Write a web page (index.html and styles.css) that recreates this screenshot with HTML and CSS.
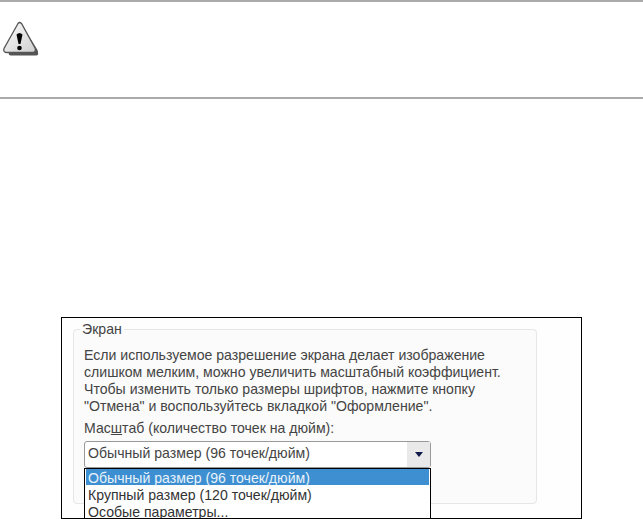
FILE: index.html
```html
<!DOCTYPE html>
<html lang="ru">
<head>
<meta charset="utf-8">
<title>Экран</title>
<link rel="stylesheet" href="styles.css">
</head>
<body>
<section class="note">
  <svg class="warn" width="36" height="36" viewBox="0 0 36 36" aria-hidden="true">
    <defs><filter id="soft" x="-20%" y="-20%" width="140%" height="140%"><feGaussianBlur stdDeviation="0.6"/></filter>
    <filter id="soft2" x="-10%" y="-10%" width="120%" height="120%"><feGaussianBlur stdDeviation="0.35"/></filter>
    <linearGradient id="fillw" x1="0" y1="0" x2="1" y2="1"><stop offset="0" stop-color="#fbfbfb"/><stop offset="1" stop-color="#d0d0d0"/></linearGradient></defs>
    <path d="M19 3 L34.500 28 Q36.500 33.500 33 33.500 L8 33.500 Q5 33.500 6 30 Z" fill="#555" filter="url(#soft)"/>
    <g filter="url(#soft2)">
      <path d="M15 1.500 Q16.500 -0.500 18.500 1.500 L32 26 Q33.500 30 30 30.500 L3 30.500 Q0 30 1 26.500 Z" fill="url(#fillw)" stroke="#555" stroke-width="1.300"/>
      <path d="M13.500 12.500 Q16.500 9.500 19.500 12.500 L17.500 22 L15.500 22 Z" fill="#050505"/>
      <circle cx="16.500" cy="26" r="2.300" fill="#050505"/>
    </g>
  </svg>
</section>
<figure class="shot">
  <fieldset class="group">
    <legend>Экран</legend>
    <p class="desc">Если используемое разрешение экрана делает изображение<br>слишком мелким, можно увеличить масштабный коэффициент.<br>Чтобы изменить только размеры шрифтов, нажмите кнопку<br>"Отмена" и воспользуйтесь вкладкой "Оформление".</p>
    <p class="label">Мас<u>ш</u>таб (количество точек на дюйм):</p>
    <div class="combo">
      <span class="value">Обычный размер (96 точек/дюйм)</span>
      <span class="arrow"><svg width="8" height="5" viewBox="0 0 8 5" aria-hidden="true"><path d="M0 0H8L4 5Z" fill="#101a4a"/></svg></span>
      <ul class="list">
        <li class="sel">Обычный размер (96 точек/дюйм)</li>
        <li>Крупный размер (120 точек/дюйм)</li>
        <li>Особые параметры...</li>
      </ul>
    </div>
  </fieldset>
</figure>
</body>
</html>
```
FILE: styles.css
```css
html, body { margin: 0; padding: 0; background: #fff; }
body { width: 643px; height: 519px; overflow: hidden; font-family: "Liberation Sans", Arial, sans-serif; }
.note { box-sizing: border-box; height: 99px; border-top: 2px solid #aaa; border-bottom: 2px solid #aaa; padding: 20px 0 0 3px; }
.warn { display: block; overflow: visible; }
.shot { box-sizing: border-box; width: 521px; height: 202px; margin: 218px 0 0 61px; border: 1px solid #000; background: #fefefe; padding: 4px 44px 0 11px; overflow: hidden; font-size: 14.100px; color: #444; }
.group { margin: 0; height: 182px; box-sizing: border-box; border: 1px solid #e6e6e6; border-radius: 4px; padding: 0 10px 0 10px; background: #fbfbfb; }
legend { padding: 0 2px; margin-left: -4px; line-height: 14px; color: #444; }
.desc { margin: 11px 0 0; line-height: 17px; }
.label { margin: 6px 0 0; line-height: 15px; }
.combo { position: relative; box-sizing: border-box; display: flex; align-items: center; justify-content: space-between; height: 27px; margin-top: 5px; width: 347px; border: 1px solid #999; border-radius: 3px; background: #fff; padding-left: 3px; }
.value { padding-bottom: 4px; }
.arrow { box-sizing: border-box; display: flex; align-items: center; justify-content: center; width: 23px; height: 25px; background: #e9e9e9; }
.list { position: absolute; z-index: 1; left: -1px; right: -1px; top: 26px; margin: 0; padding: 0 1px; list-style: none; border: 1px solid #000; background: #fff; height: 60px; }
.list li { height: 17px; line-height: 20px; padding-left: 2px; color: #333; }
.list .sel { height: 16px; line-height: 19px; background: #3d8fd1; color: #e8f2fb; }
```
